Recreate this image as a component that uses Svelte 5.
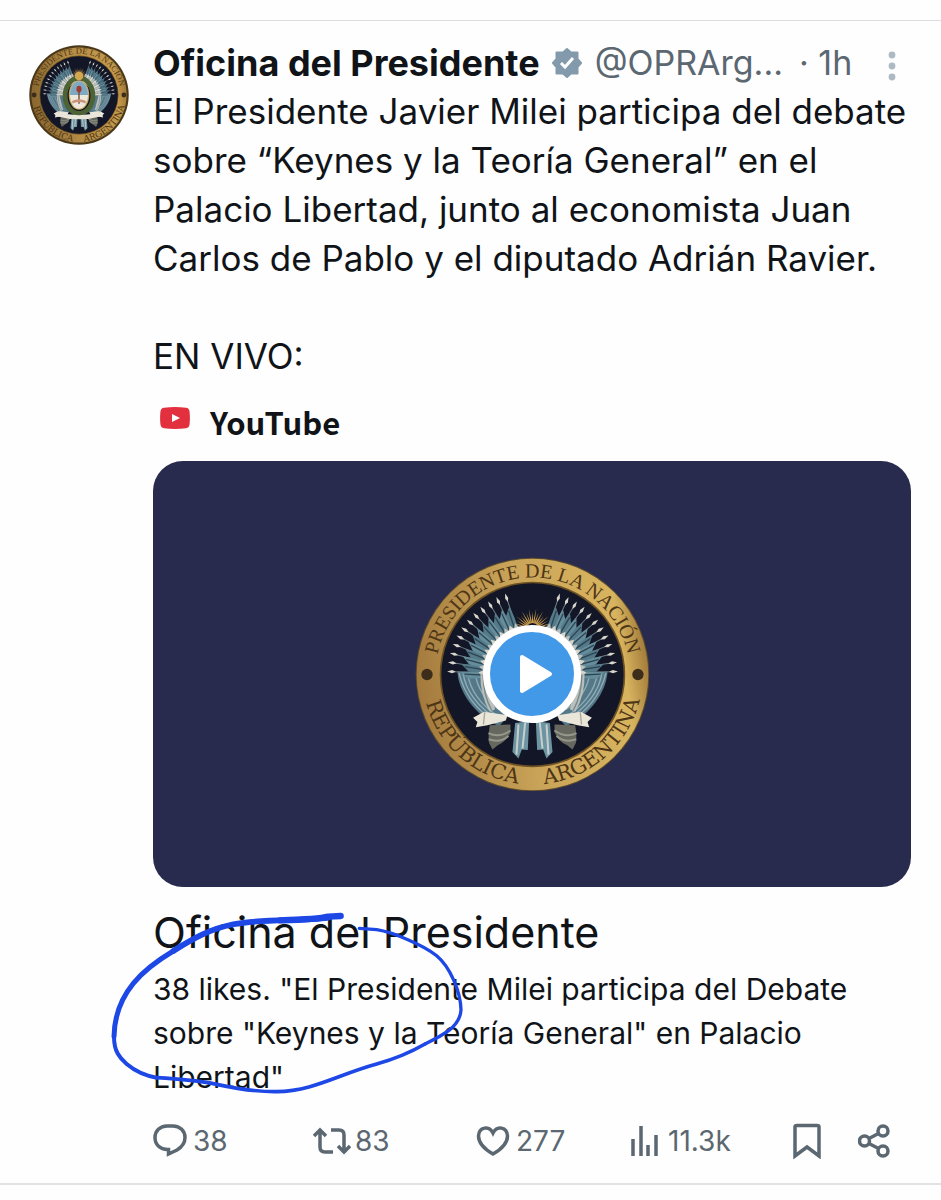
<script>
  const spears = Array.from({ length: 12 }, (_, i) => {
    const a = ((2 + i * 6.3) * Math.PI) / 180;
    const at = (r, d = 0) =>
      `${(r * Math.cos(a + d)).toFixed(1)},${(-r * Math.sin(a + d)).toFixed(1)}`;
    return {
      pole: `M${at(90)} L${at(238)}`,
      head: `M${at(256)} L${at(241, 0.02)} L${at(230)} L${at(241, -0.02)}Z`,
      flag: `M${at(216)} L${at(180, 0.02)} L${at(90, 0.05)} L${at(90, -0.12)} L${at(192, -0.1)}Z`,
      fold: `M${at(204, -0.03)} L${at(120, -0.06)}`,
      plume: `M${at(162)} L${at(148, 0.05)} L${at(90, 0.06)} L${at(90, -0.08)} L${at(150, -0.05)}Z`
    };
  });
  const rays = Array.from({ length: 19 }, (_, i) => {
    const a = ((i * 10) * Math.PI) / 180;
    const r = i % 2 ? 54 : 64;
    const p = (q, d) => `${(q * Math.cos(a + d)).toFixed(1)},${(-134 - q * Math.sin(a + d)).toFixed(1)}`;
    return `M${p(r, 0)} L${p(20, 0.12)} L${p(20, -0.12)}Z`;
  });
</script>

{#snippet wing()}
  <path d="M225-10 C222 50 175 120 100 155 L60 110 L90 0Z" fill="#557888" />
  <path d="M220-5 C205 60 165 110 105 145 M195-5 C188 45 155 95 95 130 M172-5 C166 40 145 75 100 105 M208-5 C200 50 160 100 100 138" fill="none" stroke="#8fadb6" stroke-width="4" />
  {#each spears as s, i}
    <path d={s.pole} stroke="#6b7c82" stroke-width="3" />
    <path d={s.flag} fill={i % 2 ? '#557a8a' : '#668d9c'} />
    <path d={s.fold} stroke="#2c4553" stroke-width="4" />
    <path d={s.head} fill="#d9d6cb" />
  {/each}
  {#each spears as s, i}
    <path d={s.plume} fill={i % 2 ? '#b9bfbc' : '#d8d5ca'} />
  {/each}
  <path d="M156 -4 Q158 60 128 112 L112 104 L138 0Z" fill="#b9c0bc" />
  <path d="M148 0 Q148 60 122 108" fill="none" stroke="#78888a" stroke-width="4" />
  <path d="M10 140 L52 145 L60 232 L42 252 L32 225 L14 226Z" fill="#6d94a2" />
  <path d="M22 145 L30 222 M42 150 L48 240" stroke="#c7cfcc" stroke-width="6" />
  <path d="M66 150 L128 152 Q134 190 130 205 L120 225 L104 212 Q76 200 66 172Z" fill="#66685f" />
  <path d="M66 168 Q100 192 132 176 M72 184 Q98 206 131 194" fill="none" stroke="#96978b" stroke-width="6" />
  <path d="M75 122 L145 112 L178 130 L165 142 L170 158 L135 152 L80 138Z" fill="#ebe6da" />
  <path d="M143 113 L147 150" stroke="#aaa698" stroke-width="4" />
{/snippet}

{#snippet seal(id, shield)}
  <svg class="seal" viewBox="-352 -352 704 704" role="img" aria-label="Presidente de la Nación, República Argentina">
    <defs>
      <linearGradient id="{id}-gold" x1="0" y1="0.5" x2="1" y2="0.35">
        <stop offset="0" stop-color={shield ? '#89672f' : '#a47b3e'} />
        <stop offset="0.45" stop-color={shield ? '#b48c45' : '#c9a358'} />
        <stop offset="0.88" stop-color={shield ? '#c49a4c' : '#d8b45f'} />
        <stop offset="1" stop-color="#9b7435" />
      </linearGradient>
      <path id="{id}-top" d="M-291 0 A291 291 0 0 1 291 0" />
      <path id="{id}-bottom" d="M-330 0 A330 330 0 0 0 330 0" />
    </defs>
    <circle r="350" fill={shield ? '#4a3819' : '#5b4a2b'} />
    <circle r={shield ? 335 : 347} fill="url(#{id}-gold)" />
    <circle r="278" fill="#6e5223" />
    <circle r="273" fill="#121626" />
    <g class="lettering">
      <text font-size="60"><textPath href="#{id}-top" startOffset="50%" text-anchor="middle">PRESIDENTE DE LA NACIÓN</textPath></text>
      <g class="wide">
        <text font-size="62"><textPath href="#{id}-bottom" startOffset="27%" text-anchor="middle">REPÚBLICA</textPath></text>
        <text font-size="62"><textPath href="#{id}-bottom" startOffset="73%" text-anchor="middle">ARGENTINA</textPath></text>
      </g>
    </g>
    <circle cx="-316" cy="0" r="17" fill="#3c2d1a" />
    <circle cx="316" cy="0" r="17" fill="#3c2d1a" />
    {#each rays as d}<path {d} fill="#c99b4b" />{/each}
    <g>{@render wing()}</g>
    <g transform="scale(-1 1)">{@render wing()}</g>
    {#if shield}
      <ellipse cy="5" rx="98" ry="125" fill="none" stroke="#4e6335" stroke-width="34" />
      <ellipse rx="72" ry="104" fill="#c9a65a" />
      <ellipse rx="64" ry="96" fill="#ece8dc" />
      <path d="M-64 0 A64 96 0 0 1 64 0Z" fill="#7fa9c3" />
      <path d="M0 62 V-30" stroke="#6b4226" stroke-width="9" />
      <ellipse cy="-42" rx="18" ry="24" fill="#a33a30" />
      <path d="M-50 42 Q0 18 50 42 L44 60 Q0 40 -44 60Z" fill="#c9947a" />
      <circle cy="-134" r="30" fill="#d3a650" />
      <path d="M-160 120 Q0 165 160 120 L165 148 Q0 195 -165 148Z" fill="#ebe6da" />
    {/if}
  </svg>
{/snippet}

<article>
  <a class="avatar" href="#perfil" aria-label="Oficina del Presidente">{@render seal('avatar', true)}</a>
  <div class="content">
    <header>
      <a class="name" href="#perfil">Oficina del Presidente</a>
      <svg class="badge" viewBox="0 0 30 30" role="img" aria-label="Cuenta verificada">
        <path d="M15 1 L19 4.500 H25.500 V11 L29 15 L25.500 19 V25.500 H19 L15 29 L11 25.500 H4.500 V19 L1 15 L4.500 11 V4.500 H11Z" fill="#829aab" stroke="#829aab" stroke-width="2" stroke-linejoin="round" />
        <path d="M9 15 L13 19 L21 10" fill="none" stroke="#fff" stroke-width="3" />
      </svg>
      <span class="handle">@OPRArg...</span>
      <span class="time">· 1h</span>
      <button class="more" aria-label="Más opciones">
        <svg viewBox="0 0 8 30" width="8" height="30" fill="#adbac3"><circle cx="4" cy="4" r="3.4" /><circle cx="4" cy="15" r="3.4" /><circle cx="4" cy="26" r="3.4" /></svg>
      </button>
    </header>
    <p class="post">El Presidente Javier Milei participa del debate sobre “Keynes y la Teoría General” en el Palacio Libertad, junto al economista Juan Carlos de Pablo y el diputado Adrián Ravier.

EN VIVO:</p>

    <div class="source">
      <svg viewBox="0 0 30 22" width="30" height="22" aria-hidden="true"><path d="M4 .8 Q15 -.6 26 .8 Q29.300 1 29.600 5 Q30.200 11 29.600 17 Q29.300 21 26 21.200 Q15 22.600 4 21.200 Q.7 21 .4 17 Q-.2 11 .4 5 Q.7 1 4 .8Z" fill="#e3303f" /><path d="M12 7 L20 11 L12 15Z" fill="#fff" /></svg>
      <span>YouTube</span>
    </div>

    <div class="video">
      {@render seal('video', false)}
      <button class="play" aria-label="Reproducir"><svg viewBox="0 0 34 40" width="34" height="40"><path d="M3 3 L31 20 L3 37Z" fill="#fff" stroke="#fff" stroke-width="4" stroke-linejoin="round" /></svg></button>
    </div>

    <div class="card">
      <h2>Oficina del Presidente</h2>
      <p>38 likes. "El Presidente Milei participa del Debate sobre "Keynes y la Teoría General" en Palacio Libertad"</p>
      <svg class="ink" viewBox="0 0 1140 630" aria-hidden="true">
        <path d="M722 63 L685 65 C660 72 580 75 540 76" stroke-width="19" />
        <path d="M685 68 C600 80 490 70 400 88 C330 102 280 130 220 168" stroke-width="17" />
        <path d="M220 168 C170 198 130 228 100 265 C65 308 43 360 42 425" stroke-width="15" />
        <path d="M42 425 C42 470 60 490 80 507 C105 528 135 542 170 548" stroke-width="12" />
        <path d="M170 548 C240 552 300 558 350 568 C420 583 470 591 530 590 C640 588 710 540 830 507 C880 493 930 473 975 447" stroke-width="11" />
        <path d="M975 447 C1030 420 1080 395 1083 345 C1082 290 1050 215 1010 182 C970 150 880 112 830 104 L778 100" stroke-width="10" />
      </svg>
    </div>

    <footer>
      <button aria-label="38 respuestas"><svg viewBox="0 0 34 34" width="34" height="34"><path d="M14 2 H20 C27 2 32 7 32 13.500 C32 19.500 28 23.500 24 26 L15.500 30 V25.500 C7 26 2 20.500 2 13.500 C2 7 7 2 14 2Z" /></svg>38</button>
      <button class="repost" aria-label="83 reposts"><svg viewBox="0 0 38 28" width="38" height="28"><path d="M1 9 L7 3 L13 9 M7 4 V20 Q7 25 12 25 H20 M18 3 H26 Q31 3 31 8 V24 M25 19 L31 25 L37 19" /></svg>83</button>
      <button aria-label="277 me gusta"><svg viewBox="0 0 34 34" width="34" height="34"><path d="M17 9 C21 1 31 3 31.500 12 C31.500 20 24 26 17 30 C10 26 2.500 20 2.500 12 C3 3 13 1 17 9Z" /></svg>277</button>
      <button class="views" aria-label="11.3k vistas"><svg viewBox="0 0 28 32" width="28" height="32"><path d="M2 31 V14 M10 31 V1 M17 31 V20 M25 31 V10" /></svg>11.3k</button>
      <button aria-label="Guardar"><svg viewBox="0 0 28 36" width="28" height="36"><path d="M2 33 V4 Q2 2.500 4 2.500 H24 Q26 2.500 26 4 V33 L14 24Z" /></svg></button>
      <button aria-label="Compartir"><svg viewBox="0 0 32 34" width="32" height="34"><circle cx="6.500" cy="17" r="5" /><circle cx="25" cy="7" r="5" /><circle cx="25" cy="27" r="5" /><path d="M11 14.500 L20.500 9.500 M11 19.500 L20.500 24.500" /></svg></button>
    </footer>
  </div>
</article>

<style>
  :global(body) { margin: 0; background: #fefefe; }
  article {
    display: flex;
    gap: 24px;
    margin-top: 20px;
    padding: 17px 30px 18px 29px;
    border-top: 1px solid #dcdddf;
    border-bottom: 2px solid #e2e3e5;
    font-family: Inter, "Liberation Sans", sans-serif;
    color: #101418;
  }
  button { border: 0; padding: 0; background: none; font: inherit; color: inherit; cursor: pointer; }
  a { color: inherit; text-decoration: none; }
  svg { display: block; flex: none; }
  .avatar { flex: none; width: 100px; margin-top: 7px; }
  .content { flex: 1; min-width: 0; }
  .seal { width: 100%; }
  .lettering { font-family: "Liberation Serif", serif; fill: #4d3516; }
  .wide { font-family: "DejaVu Serif", serif; }
  header { display: flex; align-items: center; height: 49px; font-size: 34px; white-space: nowrap; }
  .name { font-size: 36px; font-weight: 700; }
  .badge { width: 30px; height: 30px; margin: 0 13px 0 12px; }
  .handle, .time { color: #5b6771; }
  .time { margin-left: 16px; }
  .more { margin: 6px 15px 0 auto; }
  .post { margin: 0; font-size: 35px; line-height: 49px; white-space: pre-line; }
  .source {
    display: flex;
    align-items: center;
    gap: 20px;
    height: 44px;
    margin: 18px 0 18px 7px;
    font: 700 31px "Noto Sans CJK JP", "Noto Sans", sans-serif;
  }
  .source svg { margin-bottom: 6px; }
  .video {
    display: grid;
    place-items: center;
    aspect-ratio: 758 / 426;
    border-radius: 30px;
    background: #282b4d;
  }
  .video > :global(*) { grid-area: 1 / 1; }
  .video .seal { width: 31%; }
  .play {
    display: grid;
    place-items: center;
    width: 98px;
    height: 98px;
    border: 7px solid #fff;
    border-radius: 50%;
    background: #4299e8;
  }
  .play svg { margin-left: 7px; }
  .card { position: relative; padding-top: 18px; }
  h2 { margin: 0; font-size: 43px; font-weight: 400; line-height: 54px; }
  .card p { margin: 8px 0 0; font-size: 30px; line-height: 44px; }
  .ink {
    position: absolute;
    left: -53px;
    top: 8px;
    width: 380px;
    fill: none;
    stroke: #1d48e5;
    stroke-linecap: round;
    stroke-linejoin: round;
    pointer-events: none;
  }
  footer {
    display: grid;
    grid-template-columns: 160fr 163fr 155fr 162fr 65fr 53fr;
    align-items: center;
    height: 48px;
    margin-top: 18px;
    font-size: 28px;
    color: #5b6771;
  }
  footer button { display: flex; align-items: center; gap: 6px; }
  footer .repost { gap: 4px; }
  footer .views { gap: 9px; }
  footer svg { fill: none; stroke: #5b6771; stroke-width: 3.5; }
</style>
